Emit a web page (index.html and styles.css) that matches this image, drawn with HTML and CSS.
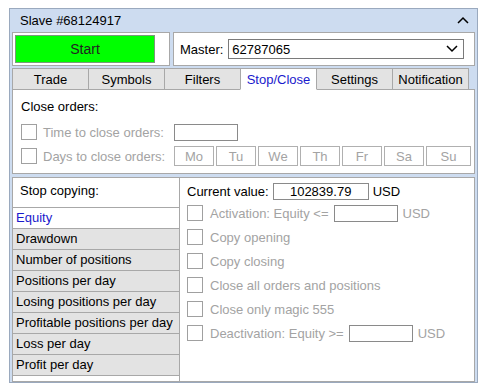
FILE: index.html
```html
<!DOCTYPE html>
<html>
<head>
<meta charset="utf-8">
<link rel="stylesheet" href="styles.css">
</head>
<body>
<div class="panel">
  <div class="header">
    <span>Slave #68124917</span>
    <svg class="caret" width="12" height="8" viewBox="0 0 12 8"><path d="M1 7 L6 2 L11 7" fill="none" stroke="#000" stroke-width="1.5"/></svg>
  </div>
  <div class="toprow">
    <div class="startbox"><div class="startbtn">Start</div></div>
    <div class="masterbox">
      <span class="mlabel">Master:</span>
      <div class="select">
        <span>62787065</span>
        <svg width="12" height="8" viewBox="0 0 12 8"><path d="M1 1 L6 6 L11 1" fill="none" stroke="#000" stroke-width="1.5"/></svg>
      </div>
    </div>
  </div>
  <div class="tabs">
    <div class="tab">Trade</div>
    <div class="tab">Symbols</div>
    <div class="tab">Filters</div>
    <div class="tab active">Stop/Close</div>
    <div class="tab">Settings</div>
    <div class="tab">Notification</div>
  </div>
  <div class="closebox">
    <div class="title">Close orders:</div>
    <div class="crow">
      <span class="cb"></span><span class="dim lab1">Time to close orders:</span><span class="inp w63"></span>
    </div>
    <div class="crow">
      <span class="cb"></span><span class="dim lab1">Days to close orders:</span>
      <div class="days">
        <span class="day">Mo</span><span class="day">Tu</span><span class="day">We</span><span class="day">Th</span><span class="day">Fr</span><span class="day">Sa</span><span class="day">Su</span>
      </div>
    </div>
  </div>
  <div class="stopbox">
    <div class="list">
      <div class="ltitle">Stop copying:</div>
      <div class="item sel">Equity</div>
      <div class="item">Drawdown</div>
      <div class="item">Number of positions</div>
      <div class="item">Positions per day</div>
      <div class="item">Losing positions per day</div>
      <div class="item">Profitable positions per day</div>
      <div class="item">Loss per day</div>
      <div class="item">Profit per day</div>
    </div>
    <div class="opts">
      <div class="cur"><span>Current value:</span><span class="inp val">102839.79</span><span>USD</span></div>
      <div class="orow"><span class="cb"></span><span class="dim">Activation: Equity &lt;=</span><span class="inp w63"></span><span class="dim">USD</span></div>
      <div class="orow"><span class="cb"></span><span class="dim">Copy opening</span></div>
      <div class="orow"><span class="cb"></span><span class="dim">Copy closing</span></div>
      <div class="orow"><span class="cb"></span><span class="dim">Close all orders and positions</span></div>
      <div class="orow"><span class="cb"></span><span class="dim">Close only magic 555</span></div>
      <div class="orow"><span class="cb"></span><span class="dim">Deactivation: Equity &gt;=</span><span class="inp w63"></span><span class="dim">USD</span></div>
    </div>
  </div>
</div>
</body>
</html>
```
FILE: styles.css
```css
* { box-sizing: border-box; }
body {
  margin: 0;
  background: #fff;
  font-family: "Liberation Sans", Arial, sans-serif;
  font-size: 13px;
  color: #000;
}
.panel {
  margin: 8px 0 0 9px;
  width: 469px;
  height: 375px;
  background: #cddcf0;
  border: 1px solid #9aa9be;
  padding: 0 2px;
}
.header {
  height: 23px;
  display: flex;
  align-items: center;
  justify-content: space-between;
  padding: 0 6px 0 8px;
}
.caret { margin-top: -2px; }
.toprow {
  display: flex;
  gap: 3px;
  height: 34px;
}
.startbox {
  width: 158px;
  background: #fff;
  border: 1px solid #a8a8a8;
  padding: 2px;
}
.startbtn {
  width: 140px;
  height: 28px;
  background: #00ff00;
  border: 1px solid #7a9a7a;
  display: flex;
  align-items: center;
  justify-content: center;
  font-size: 14px;
  color: #222;
}
.masterbox {
  flex: 1;
  background: #fff;
  border: 1px solid #a8a8a8;
  display: flex;
  align-items: center;
  padding: 0 10px 0 6px;
  gap: 5px;
}
.select {
  flex: 1;
  height: 20px;
  border: 1px solid #7a7a7a;
  display: flex;
  align-items: center;
  justify-content: space-between;
  padding: 0 5px 0 3px;
}
.tabs {
  display: flex;
  margin-top: 2px;
  height: 22px;
}
.tab {
  width: 77px;
  background: #e3e3e3;
  border: 1px solid #a8a8a8;
  margin-right: -1px;
  display: flex;
  align-items: center;
  justify-content: center;
}
.tab.active {
  background: #fff;
  color: #1a1acc;
  border-bottom-color: #fff;
  position: relative;
  z-index: 1;
}
.closebox {
  background: #fff;
  border: 1px solid #a8a8a8;
  margin-top: -1px;
  height: 85px;
  padding: 9px 0 0 8px;
}
.title { height: 21px; }
.crow {
  display: flex;
  align-items: center;
  height: 24px;
}
.cb {
  width: 16px;
  height: 16px;
  border: 1px solid #a0a0a0;
  background: #fff;
  flex: none;
}
.dim { color: #a3a3a3; }
.lab1 { margin-left: 6px; width: 131px; }
.inp {
  height: 17px;
  border: 1px solid #8a8a8a;
  background: #fff;
  display: inline-flex;
  align-items: center;
  justify-content: center;
  flex: none;
}
.w63 { width: 64px; }
.days { display: flex; gap: 2px; }
.day {
  width: 40px;
  height: 20px;
  border: 1px solid #b0b0b0;
  color: #a3a3a3;
  display: flex;
  align-items: center;
  justify-content: center;
}
.day:last-child { width: 45px; }
.stopbox {
  margin-top: 3px;
  background: #fff;
  border: 1px solid #a8a8a8;
  height: 205px;
  display: flex;
}
.list {
  width: 167px;
  border-right: 1px solid #a8a8a8;
}
.ltitle {
  height: 30px;
  padding: 5px 0 0 7px;
  border-bottom: 1px solid #a8a8a8;
}
.item {
  height: 21px;
  background: #e3e3e3;
  border-bottom: 1px solid #a8a8a8;
  padding: 2px 0 0 3px;
}
.item.sel {
  background: #fff;
  color: #1a1acc;
}
.opts {
  flex: 1;
  padding: 4px 0 0 7px;
}
.cur {
  display: flex;
  align-items: center;
  gap: 4px;
  height: 19px;
}
.val { width: 96px; }
.orow {
  display: flex;
  align-items: center;
  height: 24px;
}
.orow .cb { margin-right: 7px; }
.orow .inp { margin: 0 5px 0 5px; }
```
